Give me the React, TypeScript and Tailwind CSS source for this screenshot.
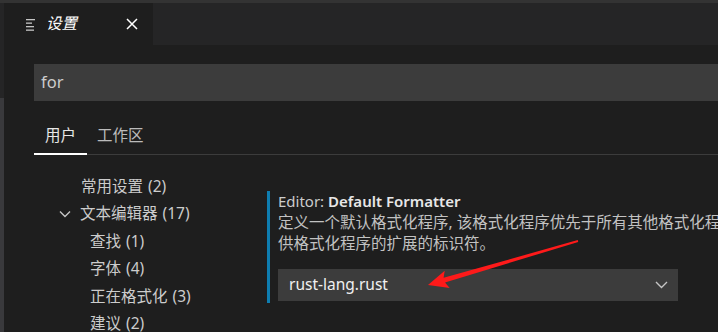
import React from "react";

const font = { fontFamily: '"Noto Sans", "Noto Sans CJK SC", sans-serif' };

function TreeItem({ label, count, indent, chevron }: { label: string; count: string; indent: string; chevron?: boolean }) {
  return (
    <div className={`flex items-center shrink-0 h-[27.4px] ${indent} text-[15.5px] text-[#cccccc] whitespace-nowrap`}>
      {chevron && (
        <svg width="12" height="8" viewBox="0 0 12 8" className="mr-[9px] ml-[-1px]">
          <path d="M1 1.5 L6 6.5 L11 1.5" fill="none" stroke="#c5c5c5" strokeWidth="1.4" />
        </svg>
      )}
      <span>{label}</span>
      <span className="ml-[5px]">{count}</span>
    </div>
  );
}

export default function App() {
  return (
    <div className="w-[718px] h-[332px] bg-[#1e1e1e] overflow-hidden relative flex flex-col" style={font}>
      <div className="h-[3px] bg-[#333333] shrink-0" />
      <div className="flex h-[42px] bg-[#252526] shrink-0">
        <div className="w-[4px]" />
        <div className="w-[149px] bg-[#1e1e1e] flex items-center">
          <svg width="12" height="14" viewBox="0 0 12 14" className="ml-[22px] mt-[1px]">
            <rect x="0" y="1" width="9" height="1.3" fill="#c5c5c5" />
            <rect x="0" y="4.5" width="6" height="1.3" fill="#c5c5c5" />
            <rect x="0" y="8" width="8" height="1.3" fill="#c5c5c5" />
            <rect x="0" y="11.5" width="8" height="1.3" fill="#c5c5c5" />
          </svg>
          <span className="ml-[8px] text-[15.5px] italic text-white leading-none">设置</span>
          <svg width="12" height="12" viewBox="0 0 12 12" className="ml-[49px]">
            <path d="M1 1 L11 11 M11 1 L1 11" stroke="#ffffff" strokeWidth="1.5" />
          </svg>
        </div>
        <div className="flex-1" />
      </div>
      <div className="flex flex-1 min-h-0 overflow-hidden">
        <div className="w-[4px] flex flex-col shrink-0">
          <div className="h-[53px] shrink-0 bg-[#252526]" />
          <div className="flex-1 bg-[#39393c]" />
        </div>
        <div className="flex-1 pl-[30px] flex flex-col min-w-0">
          <div className="shrink-0 mt-[19px] h-[37px] bg-[#3c3c3c] flex items-center pl-[7px] text-[16.5px] text-[#cccccc]">for</div>
          <div className="shrink-0 h-[54px] flex items-end border-b border-[#3c3c3c]">
            <div className="flex items-end">
              <div className="w-[53px] h-[54px] flex items-center justify-center border-b-[2px] border-white mb-[-1px] text-[15.5px] text-[#e7e7e7] pt-[18px]">用户</div>
              <div className="h-[54px] flex items-center ml-[10px] text-[15.5px] text-[#bbbbbb] pt-[18px]">工作区</div>
            </div>
          </div>
          <div className="flex shrink-0 mt-[18px]">
            <div className="w-[233px] shrink-0 flex flex-col">
              <TreeItem label="常用设置" count="(2)" indent="pl-[47px]" />
              <TreeItem label="文本编辑器" count="(17)" indent="pl-[26px]" chevron />
              <TreeItem label="查找" count="(1)" indent="pl-[56px]" />
              <TreeItem label="字体" count="(4)" indent="pl-[56px]" />
              <TreeItem label="正在格式化" count="(3)" indent="pl-[56px]" />
              <TreeItem label="建议" count="(2)" indent="pl-[56px]" />
            </div>
            <div className="flex-1 min-w-0 pt-[18px]">
              <div className="border-l-[3px] border-[#0e7db0] pl-[8px] pb-[2px] whitespace-nowrap">
                <div className="text-[15px] text-[#cccccc] leading-[20px]">
                  Editor: <span className="font-semibold text-[#e7e7e7]">Default Formatter</span>
                </div>
                <div className="text-[15.5px] text-[#c2c2c2] leading-[21px] mt-[1px]">
                  定义一个默认格式化程序, 该格式化程序优先于所有其他格式化程序设置。必须是提
                </div>
                <div className="text-[15.5px] text-[#c2c2c2] leading-[21px]">供格式化程序的扩展的标识符。</div>
                <div className="mt-[15px] w-[400px] h-[32px] bg-[#3c3c3c] flex items-center pl-[11px] pr-[10px] justify-between">
                  <span className="text-[15.5px] text-[#f0f0f0]">rust-lang.rust</span>
                  <svg width="13" height="8" viewBox="0 0 13 8">
                    <path d="M1 1 L6.5 6.5 L12 1" fill="none" stroke="#c5c5c5" strokeWidth="1.4" />
                  </svg>
                </div>
              </div>
            </div>
          </div>
        </div>
      </div>
      <svg className="absolute left-0 top-0 pointer-events-none" width="718" height="332" viewBox="0 0 718 332">
        <polygon
          points="577.8,240.1 443.6,277.8 444.7,270.8 428,285 449.7,288 445,282.6 578.2,241.9"
          fill="#fe1a1a"
        />
      </svg>
    </div>
  );
}
